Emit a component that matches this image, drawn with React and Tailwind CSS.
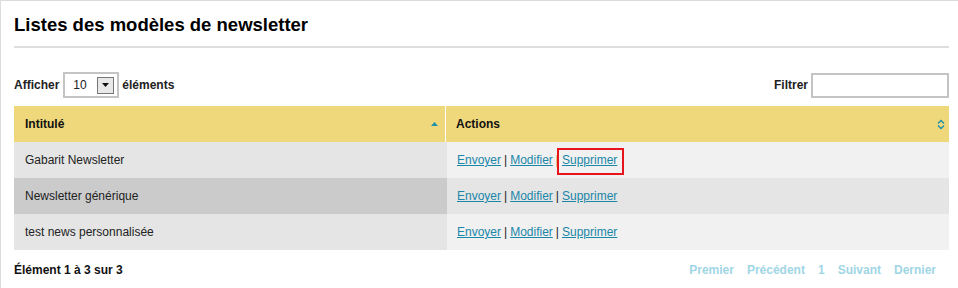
export default function App() {
  const rows = [
    { name: "Gabarit Newsletter", l: "bg-[#e5e5e5]", r: "bg-[#f1f1f1]", box: true },
    { name: "Newsletter générique", l: "bg-[#cbcbcb]", r: "bg-[#e5e5e5]" },
    { name: "test news personnalisée", l: "bg-[#e5e5e5]", r: "bg-[#f1f1f1]" },
  ];
  const link = "text-[#1a86a8] underline";
  return (
    <div className="w-[958px] h-[288px] bg-white border-l border-t border-[#dcdcdc] font-['Liberation_Sans',Arial,sans-serif] text-[12px] text-[#222] overflow-hidden">
      <div className="pl-[13px] pr-[9px]">
        <h1 className="pt-[13px] h-[45px] text-[18.5px] font-bold text-black leading-[22px]">Listes des modèles de newsletter</h1>
        <div className="h-[2px] bg-[#dedede]"></div>
        <div className="flex items-center justify-between mt-[24px] h-[26px]">
          <div className="flex items-center font-bold">
            <span>Afficher</span>
            <div className="ml-[4px] w-[56px] h-[26px] border-2 border-[#c4c4c4] flex items-center justify-between pl-[8px] pr-[3px] font-normal">
              <span className="text-[12px]">10</span>
              <div className="w-[17px] h-[17px] border border-[#777] bg-[#e8e8e8] flex items-center justify-center">
                <svg width="7" height="4" viewBox="0 0 7 4"><path d="M0 0H7L3.5 4Z" fill="#111" /></svg>
              </div>
            </div>
            <span className="ml-[3px]">éléments</span>
          </div>
          <div className="flex items-center font-bold">
            <span>Filtrer</span>
            <div className="ml-[3px] w-[138px] h-[25px] border-2 border-[#c4c4c4]"></div>
          </div>
        </div>
        <div className="mt-[8px]">
          <div className="flex h-[36px] bg-[#efd87b] font-bold text-[#111]">
            <div className="w-[432px] flex items-center justify-between pl-[11px] pr-[7px] border-r border-white">
              <span>Intitulé</span>
              <svg width="7" height="4" viewBox="0 0 7 4"><path d="M0 4H7L3.5 0Z" fill="#1b8fae" /></svg>
            </div>
            <div className="flex-1 flex items-center justify-between pl-[10px] pr-[4px]">
              <span>Actions</span>
              <svg width="8" height="11" viewBox="0 0 8 11"><path d="M1 4.5L4 1.5L7 4.5M1 6.5L4 9.5L7 6.5" fill="none" stroke="#1b8fae" strokeWidth="1.4" /></svg>
            </div>
          </div>
          {rows.map((r) => (
            <div key={r.name} className="flex h-[36px]">
              <div className={`w-[433px] flex items-center pl-[11px] ${r.l}`}>{r.name}</div>
              <div className={`flex-1 flex items-center pl-[10px] ${r.r}`}>
                <a className={link}>Envoyer</a>
                <span className="mx-[3px]">|</span>
                <a className={link}>Modifier</a>
                <span className="mx-[3px]">|</span>
                <span className="relative inline-block leading-[14px]">
                  <a className={link}>Supprimer</a>
                  {r.box && (
                    <span className="absolute left-[-5px] top-[-5px] w-[67px] h-[27px] border-2 border-[#e8141c]"></span>
                  )}
                </span>
              </div>
            </div>
          ))}
        </div>
        <div className="flex items-center justify-between mt-[11px] pr-[13px] font-bold">
          <span className="text-[#111]">Élément 1 à 3 sur 3</span>
          <div className="flex gap-[13px] text-[#9fd6e5]">
            <span>Premier</span>
            <span>Précédent</span>
            <span>1</span>
            <span>Suivant</span>
            <span>Dernier</span>
          </div>
        </div>
      </div>
    </div>
  );
}
